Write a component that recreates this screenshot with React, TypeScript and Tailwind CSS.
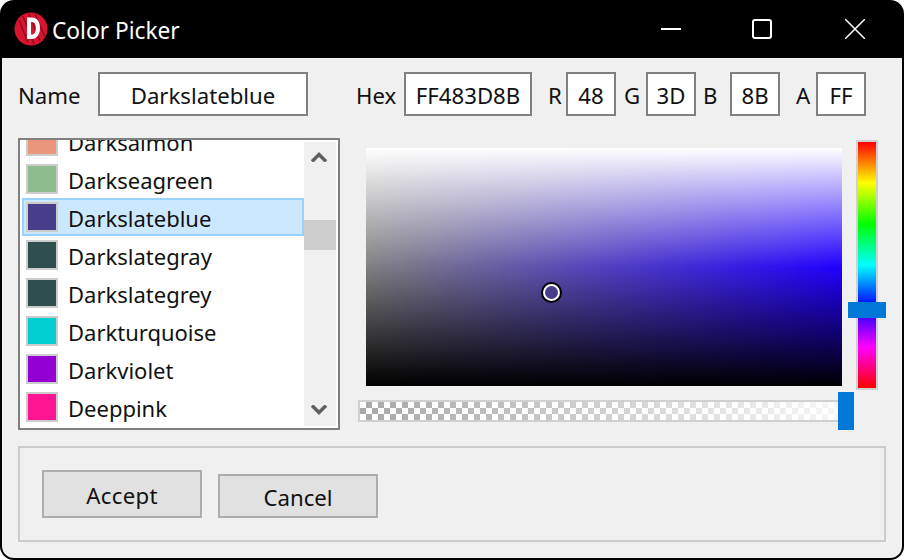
import React from 'react';

const colors = [
  { name: 'Darksalmon', hex: '#E9967A' },
  { name: 'Darkseagreen', hex: '#8FBC8F' },
  { name: 'Darkslateblue', hex: '#483D8B', selected: true },
  { name: 'Darkslategray', hex: '#2F4F4F' },
  { name: 'Darkslategrey', hex: '#2F4F4F' },
  { name: 'Darkturquoise', hex: '#00CED1' },
  { name: 'Darkviolet', hex: '#9400D3' },
  { name: 'Deeppink', hex: '#FF1493' },
];

const Field = ({ value, className }: { value: string; className: string }) => (
  <div className={`h-[44px] bg-white border-2 border-[#808080] flex items-center justify-center pt-[4px] ${className}`}>{value}</div>
);

const Logo = () => (
  <svg width="34" height="34" viewBox="0 0 34 34" className="shrink-0">
    <circle cx="17" cy="17" r="16.5" fill="#d9142f" />
    <path d="M5 8 L14 31 M9 4 L20 32 M15 2 L26 29 M21 2 L31 25" stroke="#8e0b20" strokeWidth="1.500" fill="none" />
    <path d="M13 5.500h4.500c6 0 8.500 4.500 8.500 10.500s-3 11-8.500 11H13z M17 10v12.500h.8c2.700 0 4-2.500 4-6.500s-1.300-6-4-6z" fill="#fff" fillRule="evenodd" />
  </svg>
);

export default function App() {
  return (
    <div className="w-[904px] h-[560px] bg-white font-['Noto_Sans',sans-serif] text-[22.2px] text-[#111]">
      <div className="w-full h-full bg-black rounded-[14px] flex flex-col overflow-hidden">
        {/* Title bar */}
        <div className="h-[58px] shrink-0 flex items-center pl-[14px] pr-[3px] text-white">
          <Logo />
          <span className="ml-[4px] pt-[4px] text-[22.7px]">Color Picker</span>
          <div className="ml-auto flex items-center">
            <button className="w-[92px] flex justify-center">
              <svg width="20" height="20" viewBox="0 0 20 20"><path d="M0 10h20" stroke="#fff" strokeWidth="2" /></svg>
            </button>
            <button className="w-[92px] flex justify-center pr-[2px]">
              <svg width="20" height="20" viewBox="0 0 20 20"><rect x="1" y="1" width="18" height="18" rx="2" fill="none" stroke="#fff" strokeWidth="2" /></svg>
            </button>
            <button className="w-[92px] flex justify-center">
              <svg width="20" height="20" viewBox="0 0 20 20"><path d="M0 0l20 20M20 0L0 20" stroke="#fff" strokeWidth="1.500" /></svg>
            </button>
          </div>
        </div>

        <div className="flex-1 mx-[2px] mb-[2px] bg-[#f0f0f0] rounded-b-[12px] pl-[16px] pt-[14px]">
          {/* Name / hex / channel fields */}
          <div className="flex items-center h-[44px]">
            <span className="w-[80px] pt-[4px]">Name</span>
            <Field value="Darkslateblue" className="w-[210px]" />
            <span className="ml-[48px] w-[48px] pt-[4px]">Hex</span>
            <Field value="FF483D8B" className="w-[128px]" />
            <span className="ml-[16px] w-[18px] pt-[4px]">R</span>
            <Field value="48" className="w-[50px]" />
            <span className="ml-[8px] w-[22px] pt-[4px]">G</span>
            <Field value="3D" className="w-[50px]" />
            <span className="ml-[7px] w-[27px] pt-[4px]">B</span>
            <Field value="8B" className="w-[50px]" />
            <span className="ml-[16px] w-[20px] pt-[4px]">A</span>
            <Field value="FF" className="w-[50px]" />
          </div>

          <div className="flex mt-[22px]">
            {/* Color list */}
            <div className="w-[322px] h-[292px] border-2 border-[#808080] bg-white flex shrink-0">
              <div className="w-[284px] pl-[2px] overflow-hidden text-[22px]">
                <div className="-mt-[18px]">
                  {colors.map(c => (
                    <div
                      key={c.name}
                      className={`h-[38px] flex items-center pl-[2px] border-2 ${c.selected ? 'bg-[#cce8ff] border-[#99d1ff]' : 'border-transparent'}`}
                    >
                      <div className="w-[32px] h-[30px] border-2 border-[#cccccc]" style={{ backgroundColor: c.hex }} />
                      <span className="ml-[10px] pt-[2px]">{c.name}</span>
                    </div>
                  ))}
                </div>
              </div>
              <div className="w-[32px] my-[2px] bg-[#f0f0f0] flex flex-col items-center">
                <svg width="16" height="10" viewBox="0 0 16 10" className="mt-[10px] mr-[2px]"><path d="M1 9.500L8 2.500 15 9.500" fill="none" stroke="#606060" strokeWidth="3.500" /></svg>
                <div className="w-full h-[30px] bg-[#cdcdcd] mt-[58px]" />
                <svg width="16" height="10" viewBox="0 0 16 10" className="mt-auto mb-[11px] mr-[2px]"><path d="M1 .5L8 7.500 15 .5" fill="none" stroke="#606060" strokeWidth="3.500" /></svg>
              </div>
            </div>

            {/* Picker area */}
            <div className="ml-[18px] w-[496px] shrink-0">
              <div className="relative ml-[8px] mt-[10px] w-[476px] h-[238px] bg-[linear-gradient(to_bottom,#fff,rgba(255,255,255,0)_50%,rgba(0,0,0,0)_50%,#000),linear-gradient(to_right,#808080,#2200ff)]">
                <div className="absolute left-[175px] top-[134px] w-[21px] h-[21px] rounded-full border-2 border-black bg-white p-[2px]">
                  <div className="w-full h-full rounded-full bg-[#483D8B]" />
                </div>
              </div>
              <div className="relative mt-[14px] w-[482px] h-[22px] border-2 border-[#d0d0d0]">
                <div className="w-full h-full bg-[repeating-conic-gradient(#a8a8a8_0_25%,#fff_0_50%)] bg-[length:12px_12px]">
                  <div className="w-full h-full bg-[linear-gradient(to_right,rgba(255,255,255,0),rgba(255,255,255,0.9))]" />
                </div>
                <div className="absolute left-[478px] -top-[10px] w-[16px] h-[38px] bg-[#0078d7]" />
              </div>
            </div>

            {/* Hue slider */}
            <div className="relative ml-[2px] mt-[2px] w-[22px] h-[250px] border-2 border-[#d0d0d0] shrink-0">
              <div className="w-full h-full bg-[linear-gradient(to_bottom,#f00,#ff0,#0f0,#0ff,#00f,#f0f,#f00)]" />
              <div className="absolute -left-[10px] top-[160px] w-[38px] h-[16px] bg-[#0078d7]" />
            </div>
          </div>

          {/* Actions */}
          <div className="mt-[16px] w-[868px] h-[96px] border-2 border-[#cccccc] flex items-end pl-[22px] pb-[22px] gap-[16px]">
            <button className="w-[160px] h-[48px] bg-[#e1e1e1] border-2 border-[#adadad] pt-[4px] tracking-[0.3px]">Accept</button>
            <button className="w-[160px] h-[44px] bg-[#e1e1e1] border-2 border-[#adadad] pt-[4px]">Cancel</button>
          </div>
        </div>
      </div>
    </div>
  );
}
